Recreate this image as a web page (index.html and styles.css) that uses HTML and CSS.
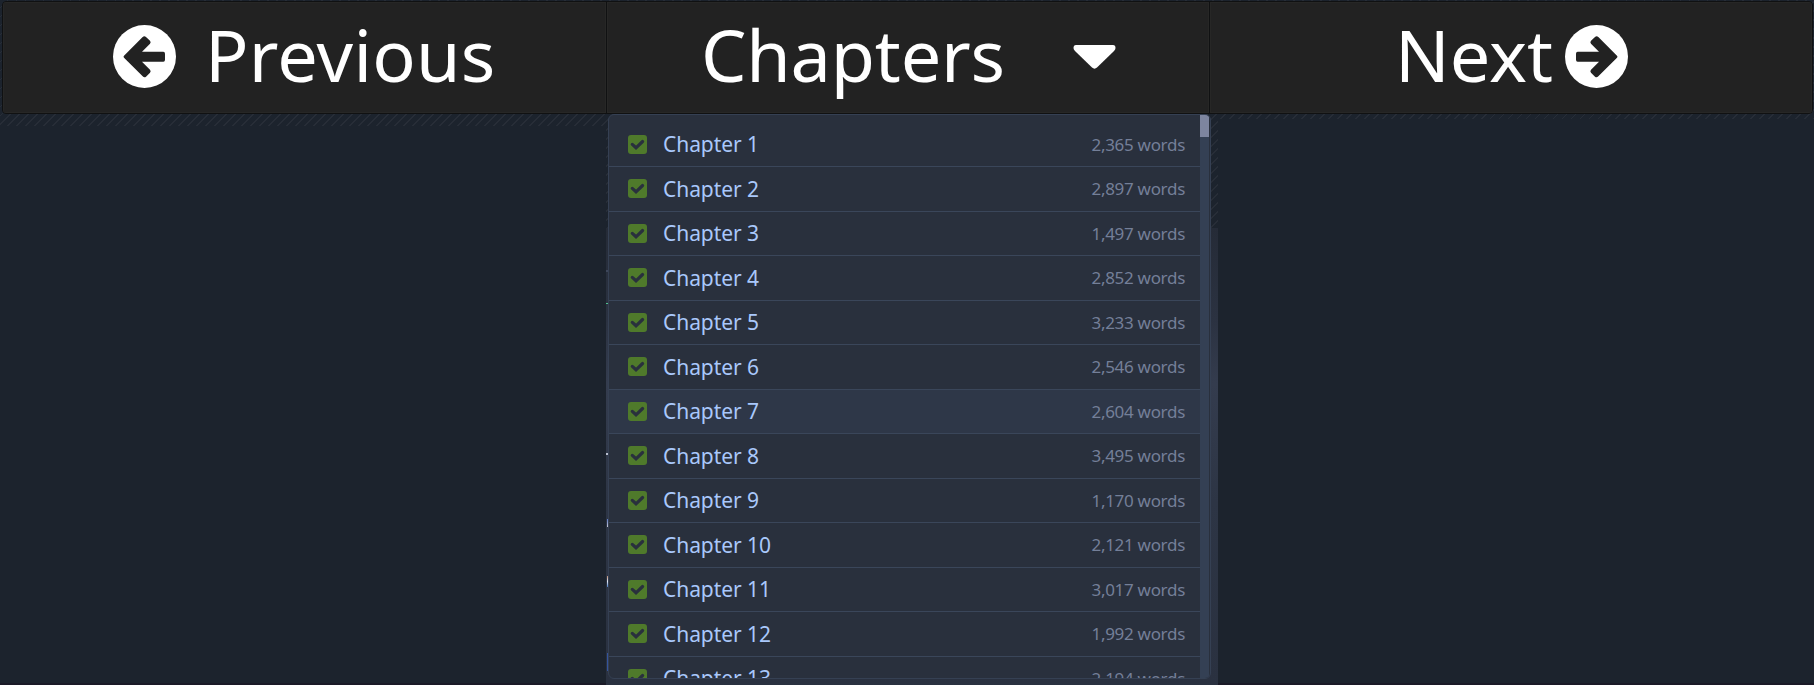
FILE: index.html
```html
<!DOCTYPE html>
<html lang="en">
<head>
<meta charset="utf-8">
<title>Chapters</title>
<link rel="stylesheet" href="styles.css">
</head>
<body>
<svg class="defs" width="0" height="0">
  <defs>
    <symbol id="arrow" viewBox="0 0 189 189"><circle cx="94.500" cy="94.500" r="94.500" fill="currentColor"/><path d="M33 92L89 36Q94 31 99 36L111 47Q115 51 111 56L87 80H151Q156 80 156 86V104Q156 110 151 110H87L111 134Q115 139 111 143L99 155Q94 159 89 154L33 98Q30 95 33 92Z" fill="#222"/></symbol>
    <symbol id="check" viewBox="0 0 19 19"><rect width="19" height="19" rx="3" fill="currentColor"/><path d="M4.300 9.400L8 12.800L14.600 6.500" fill="none" stroke="#29303d" stroke-width="3.200" stroke-linecap="round" stroke-linejoin="miter"/></symbol>
  </defs>
</svg>
<div class="backdrop"></div>
<nav class="bar">
  <a class="btn prev"><svg class="arrow"><use href="#arrow"/></svg><span>Previous</span></a>
  <a class="btn current"><span>Chapters</span><svg class="caret" viewBox="0 0 43 24"><path d="M3 0H40Q42.500 0 42.500 3Q42.500 4.500 41 6L24 22.500Q21.500 24.800 19 22.500L2 6Q.5 4.500 .5 3Q.5 0 3 0Z" fill="currentColor"/></svg></a>
  <a class="btn next"><span>Next</span><svg class="arrow flip"><use href="#arrow"/></svg></a>
</nav>
<div class="menu">
  <ul class="list">
    <li><svg><use href="#check"/></svg><b>Chapter 1</b><i>2,365 words</i></li>
    <li><svg><use href="#check"/></svg><b>Chapter 2</b><i>2,897 words</i></li>
    <li><svg><use href="#check"/></svg><b>Chapter 3</b><i>1,497 words</i></li>
    <li><svg><use href="#check"/></svg><b>Chapter 4</b><i>2,852 words</i></li>
    <li><svg><use href="#check"/></svg><b>Chapter 5</b><i>3,233 words</i></li>
    <li><svg><use href="#check"/></svg><b>Chapter 6</b><i>2,546 words</i></li>
    <li class="hover"><svg><use href="#check"/></svg><b>Chapter 7</b><i>2,604 words</i></li>
    <li><svg><use href="#check"/></svg><b>Chapter 8</b><i>3,495 words</i></li>
    <li><svg><use href="#check"/></svg><b>Chapter 9</b><i>1,170 words</i></li>
    <li><svg><use href="#check"/></svg><b>Chapter 10</b><i>2,121 words</i></li>
    <li><svg><use href="#check"/></svg><b>Chapter 11</b><i>3,017 words</i></li>
    <li><svg><use href="#check"/></svg><b>Chapter 12</b><i>1,992 words</i></li>
    <li><svg><use href="#check"/></svg><b>Chapter 13</b><i>2,194 words</i></li>
  </ul>
  <div class="track"><div class="thumb"></div></div>
</div>
</body>
</html>
```

FILE: styles.css
```css
* { box-sizing: border-box; }
body {
  margin: 0;
  height: 685px;
  overflow: hidden;
  position: relative;
  padding: 1px 1px 0 2px;
  background: linear-gradient(#1c232d, #1c232d) 0 126px / 606px 557px no-repeat,
    linear-gradient(#1c232d, #1c232d) 1218px 119px / 596px 564px no-repeat,
    linear-gradient(#1b1a27, #1b1a27) 0 683px / 100% 2px no-repeat,
    repeating-linear-gradient(135deg, #1c232d 0 5px, #272d37 5px 6.360px);
  font-family: "Noto Sans", sans-serif;
}
.defs { position: absolute; }
/* page content showing in slivers beside the open menu */
.backdrop {
  position: absolute;
  left: 606px;
  top: 228px;
  width: 612px;
  height: 457px;
  background:
    linear-gradient(#3d465a, #3d465a) 0 42px / 2px 2px no-repeat,
    linear-gradient(#4fc08d, #4fc08d) 0 75px / 2px 1px no-repeat,
    linear-gradient(#b9bfce, #b9bfce) 0 225px / 2px 2px no-repeat,
    linear-gradient(#5b78c4, #c8c8d2) 1px 291px / 1px 8px no-repeat,
    linear-gradient(#b98a72, #dfe6f2, #4a7cc0) 1px 348px / 1px 11px no-repeat,
    linear-gradient(#34549c, #34549c) 1px 425px / 1px 18px no-repeat,
    linear-gradient(#252b37, #2b3241 20%, #343c4e 34%, #2d3545 60%, #2a3140);
}
.bar {
  position: relative;
  display: flex;
  height: 113px;
  width: 1811px;
  border: 1px solid #101112;
  border-radius: 4px;
  background: #222;
  overflow: hidden;
}
.btn {
  display: flex;
  align-items: center;
  color: #fff;
  font-size: 72px;
  line-height: 98px;
  padding-bottom: 2px;
  box-shadow: inset 0 0 0 1px #272726;
}
.btn span { position: relative; top: -3px; }
.prev { width: 604px; padding-left: 110px; border-right: 1px solid #101112; }
.prev span { margin-left: 29px; letter-spacing: .2px; }
.current { width: 603px; padding-left: 94px; border-right: 1px solid #101112; }
.current span { letter-spacing: -.2px; }
.next { flex: 1; padding-left: 185px; }
.arrow { width: 63px; height: 63px; }
.flip { transform: scaleX(-1); margin-left: 12px; }
.caret { width: 43px; height: 24px; margin: 1px 0 0 68px; }
.menu {
  position: relative;
  display: flex;
  margin-left: 606px;
  width: 603px;
  height: 565px;
  border: 1px solid #354053;
  border-radius: 6px;
  background: #29303d;
  overflow: hidden;
}
.list {
  flex: 1;
  margin: 0;
  padding: 7.500px 0 0;
  list-style: none;
}
.list li {
  display: flex;
  align-items: center;
  height: 44.530px;
  border-bottom: 1px solid #3a465a;
  padding: 0 15px 0 19px;
}
.list .hover { background: #2e3748; }
.list svg { width: 19px; height: 19px; color: #4f7a2b; }
.list b { flex: 1; margin-left: 16px; font-weight: 400; font-size: 21px; letter-spacing: -.06px; color: #a9c8fb; }
.list i { font-style: normal; font-size: 17px; letter-spacing: -.3px; color: #747f98; }
.track { width: 9px; margin-right: 1px; background: #344054; }
.thumb { height: 22px; background: #7d859f; }
```
